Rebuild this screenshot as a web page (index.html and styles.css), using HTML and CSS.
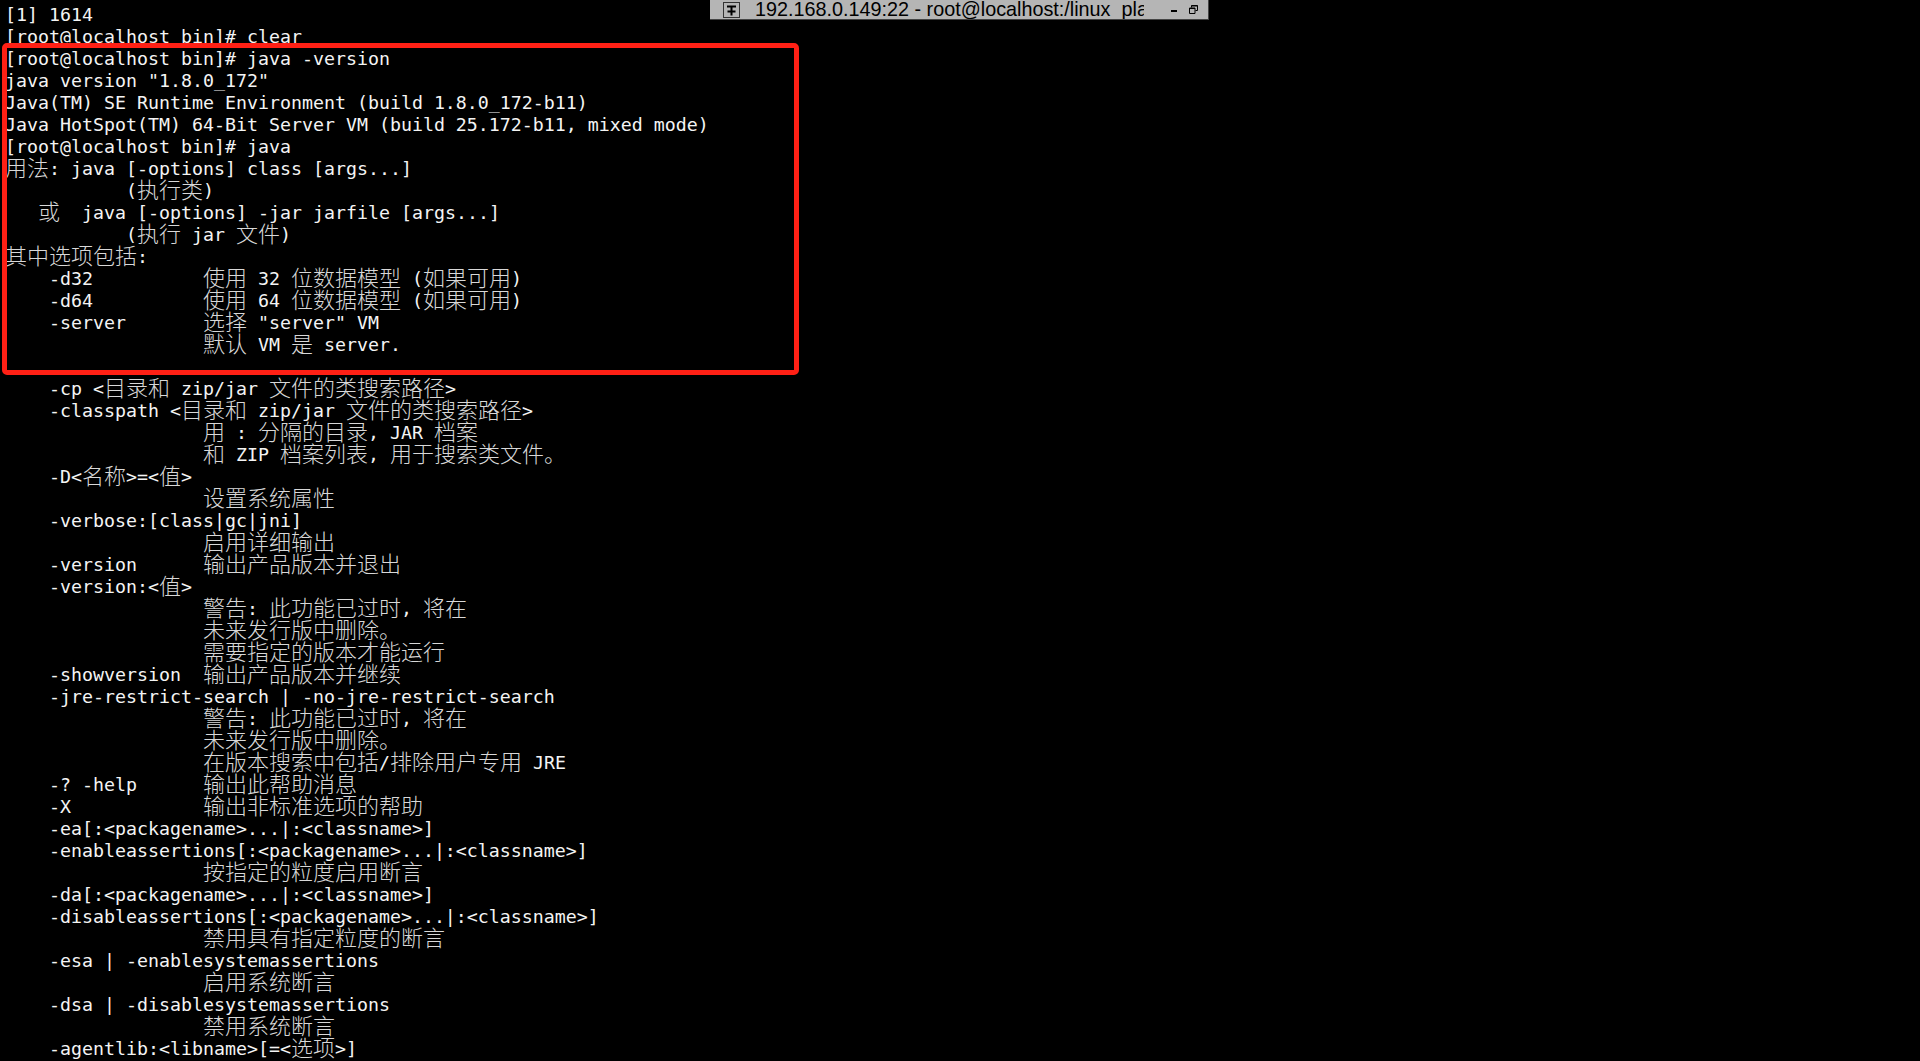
FILE: index.html
```html
<!DOCTYPE html>
<html lang="zh">
<head>
<meta charset="utf-8">
<title>192.168.0.149:22 - root@localhost:/linux_pla</title>
<link rel="stylesheet" href="styles.css">
</head>
<body>
<pre class="terminal">[1] 1614
[root@localhost bin]# clear
[root@localhost bin]# java -version
java version "1.8.0_172"
Java(TM) SE Runtime Environment (build 1.8.0_172-b11)
Java HotSpot(TM) 64-Bit Server VM (build 25.172-b11, mixed mode)
[root@localhost bin]# java
<span class="c">用法</span>: java [-options] class [args...]
           (<span class="c">执行类</span>)
   <span class="c">或</span>  java [-options] -jar jarfile [args...]
           (<span class="c">执行</span> jar <span class="c">文件</span>)
<span class="c">其中选项包括</span>:
    -d32          <span class="c">使用</span> 32 <span class="c">位数据模型</span> (<span class="c">如果可用</span>)
    -d64          <span class="c">使用</span> 64 <span class="c">位数据模型</span> (<span class="c">如果可用</span>)
    -server       <span class="c">选择</span> "server" VM
                  <span class="c">默认</span> VM <span class="c">是</span> server.

    -cp &lt;<span class="c">目录和</span> zip/jar <span class="c">文件的类搜索路径</span>&gt;
    -classpath &lt;<span class="c">目录和</span> zip/jar <span class="c">文件的类搜索路径</span>&gt;
                  <span class="c">用</span> : <span class="c">分隔的目录</span>, JAR <span class="c">档案</span>
                  <span class="c">和</span> ZIP <span class="c">档案列表</span>, <span class="c">用于搜索类文件。</span>
    -D&lt;<span class="c">名称</span>&gt;=&lt;<span class="c">值</span>&gt;
                  <span class="c">设置系统属性</span>
    -verbose:[class|gc|jni]
                  <span class="c">启用详细输出</span>
    -version      <span class="c">输出产品版本并退出</span>
    -version:&lt;<span class="c">值</span>&gt;
                  <span class="c">警告</span>: <span class="c">此功能已过时</span>, <span class="c">将在</span>
                  <span class="c">未来发行版中删除。</span>
                  <span class="c">需要指定的版本才能运行</span>
    -showversion  <span class="c">输出产品版本并继续</span>
    -jre-restrict-search | -no-jre-restrict-search
                  <span class="c">警告</span>: <span class="c">此功能已过时</span>, <span class="c">将在</span>
                  <span class="c">未来发行版中删除。</span>
                  <span class="c">在版本搜索中包括</span>/<span class="c">排除用户专用</span> JRE
    -? -help      <span class="c">输出此帮助消息</span>
    -X            <span class="c">输出非标准选项的帮助</span>
    -ea[:&lt;packagename&gt;...|:&lt;classname&gt;]
    -enableassertions[:&lt;packagename&gt;...|:&lt;classname&gt;]
                  <span class="c">按指定的粒度启用断言</span>
    -da[:&lt;packagename&gt;...|:&lt;classname&gt;]
    -disableassertions[:&lt;packagename&gt;...|:&lt;classname&gt;]
                  <span class="c">禁用具有指定粒度的断言</span>
    -esa | -enablesystemassertions
                  <span class="c">启用系统断言</span>
    -dsa | -disablesystemassertions
                  <span class="c">禁用系统断言</span>
    -agentlib:&lt;libname&gt;[=&lt;<span class="c">选项</span>&gt;]</pre>
<div class="highlight"></div>
<div class="titlebar">
  <span class="pin">
    <svg width="15" height="14" viewBox="0 0 15 14"><path d="M3 3.5H12M7.5 3.5V12.5M3.5 8.5H11.5" fill="none" stroke="#000" stroke-width="2"/></svg>
  </span>
  <span class="title">192.168.0.149:22 - root@localhost:/linux_platform</span>
  <span class="min"></span>
  <svg class="restore" width="9" height="9" viewBox="0 0 9 9"><path d="M2.5 2.5V.5H8.5V5.5H6.5M.5 3H6V8.5H.5Z" fill="none" stroke="#000"/><path d="M2.5 1H8.5M.5 3.5H6" stroke="#000"/></svg>
</div>
</body>
</html>
```
FILE: styles.css
```css
html, body {
  margin: 0;
  height: 100%;
  background: #000;
  overflow: hidden;
}
.terminal {
  margin: 0;
  padding: 4px 0 0 5px;
  font-family: "DejaVu Sans Mono", "Noto Sans CJK SC", monospace;
  font-size: 18.27px;
  line-height: 22px;
  color: #f4f4f4;
  white-space: pre;
}
.c {
  font-family: "Noto Sans CJK SC", sans-serif;
  font-size: 22px;
  line-height: 0;
  color: #d8d8d8;
  font-weight: 300;
  vertical-align: -1px;
}
.highlight {
  position: absolute;
  left: 2px;
  top: 43px;
  width: 787px;
  height: 322px;
  border: 5px solid #ff2015;
  border-radius: 5px;
}
.titlebar {
  position: absolute;
  left: 710px;
  top: 0;
  width: 498px;
  height: 19px;
  background: #b5b5b5;
  border-bottom: 1px solid #444;
  border-right: 1px solid #444;
  display: flex;
  align-items: center;
  font-family: "Liberation Sans", Arial, sans-serif;
  color: #000;
  overflow: hidden;
}
.pin {
  margin-left: 13px;
  width: 15px;
  height: 14px;
  border: 1px solid #333;
  display: flex;
}
.title {
  margin-left: 15px;
  width: 389px;
  overflow: hidden;
  white-space: nowrap;
  font-size: 19.8px;
  line-height: 19px;
}
.min {
  margin-left: 27px;
  margin-top: 3px;
  width: 6px;
  height: 2px;
  background: #000;
}
.restore {
  margin-left: 12px;
}
```
